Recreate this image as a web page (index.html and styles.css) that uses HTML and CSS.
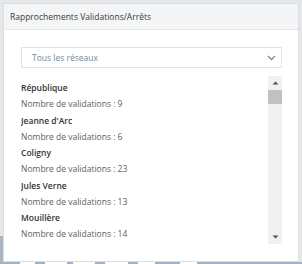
FILE: index.html
```html
<!DOCTYPE html>
<html lang="fr">
<head>
<meta charset="utf-8">
<link rel="stylesheet" href="styles.css">
</head>
<body>
<div class="page">
  <div class="page-side"></div>
  <div class="page-bottom">
    <span class="seg s1"></span><span class="gap g1"></span>
    <span class="seg s2"></span><span class="gap g2"></span>
    <span class="seg s3"></span><span class="gap g3"></span>
    <span class="seg s4"></span><span class="gap g4"></span>
    <span class="seg s5"></span><span class="gap g5"></span>
    <span class="seg s6"></span><span class="gap g6"></span>
    <span class="seg s7"></span>
  </div>
</div>
<div class="modal">
  <div class="modal-header">Rapprochements Validations/Arrêts</div>
  <div class="modal-body">
    <div class="select">
      <span>Tous les réseaux</span>
      <svg class="chev" width="9" height="6" viewBox="0 0 9 6"><path d="M1 1 L4.5 4.5 L8 1" fill="none" stroke="#6f8ea3" stroke-width="1.3"/></svg>
    </div>
    <div class="list-wrap">
      <div class="list">
        <div class="item"><p class="name">République</p><p class="count">Nombre de validations : 9</p></div>
        <div class="item"><p class="name">Jeanne d'Arc</p><p class="count">Nombre de validations : 6</p></div>
        <div class="item"><p class="name">Coligny</p><p class="count">Nombre de validations : 23</p></div>
        <div class="item"><p class="name">Jules Verne</p><p class="count">Nombre de validations : 13</p></div>
        <div class="item"><p class="name">Mouillère</p><p class="count">Nombre de validations : 14</p></div>
      </div>
      <div class="scrollbar">
        <div class="sb-btn"><svg width="7" height="4" viewBox="0 0 7 4"><path d="M3.5 0.5 L6.5 3.5 L0.5 3.5 Z" fill="#505050"/></svg></div>
        <div class="sb-thumb"></div>
        <div class="sb-track"></div>
        <div class="sb-btn"><svg width="7" height="4" viewBox="0 0 7 4"><path d="M0.5 0.5 L6.5 0.5 L3.5 3.5 Z" fill="#505050"/></svg></div>
      </div>
    </div>
  </div>
</div>
</body>
</html>
```

FILE: styles.css
```css
html, body {
  margin: 0;
  padding: 0;
}
body {
  background: #e6e7e8;
  font-family: "Open Sans", "Noto Sans", sans-serif;
  width: 302px;
  height: 264px;
  overflow: hidden;
  position: relative;
}
.page {
  height: 264px;
  display: flex;
  flex-direction: column;
  justify-content: flex-end;
  position: relative;
}
.page-side {
  width: 3px;
  height: 26px;
  background: #a9b5c2;
}
.page-bottom {
  display: flex;
  height: 2px;
}
.seg { background: #a4b1bf; height: 2px; }
.gap { background: #ffffff; height: 2px; }
.s1 { width: 20px; }
.g1 { width: 15px; }
.s2 { width: 10px; }
.g2 { width: 22px; }
.s3 { width: 6px; }
.g3 { width: 22px; }
.s4 { width: 10px; }
.g4 { width: 23px; }
.s5 { width: 10px; }
.g5 { width: 17px; }
.s6 { width: 25px; }
.g6 { width: 17px; }
.s7 { flex: 1; }

.modal {
  position: absolute;
  left: 3px;
  top: 3px;
  width: 296px;
  height: 259px;
  box-sizing: border-box;
  border: 1px solid #dcdfe2;
  background: #ffffff;
  display: flex;
  flex-direction: column;
}
.modal-header {
  height: 26px;
  box-sizing: border-box;
  background: #f4f5f6;
  border-bottom: 1px solid #e3e5e7;
  padding-left: 6px;
  display: flex;
  align-items: center;
  font-size: 8.5px;
  color: #3a3a3a;
}
.modal-body {
  padding: 17px 16px 0 17px;
  display: flex;
  flex-direction: column;
}
.select {
  height: 21px;
  box-sizing: border-box;
  border: 1px solid #e1e3e5;
  display: flex;
  align-items: center;
  justify-content: space-between;
  padding: 0 5px 0 10px;
  font-size: 8.5px;
  color: #6f8ea3;
}
.chev { display: block; }
.list-wrap {
  margin-top: 8px;
  height: 168px;
  display: flex;
}
.list {
  flex: 1;
  overflow: hidden;
  padding-top: 4px;
}
.scrollbar {
  width: 14px;
  background: #f1f1f1;
  display: flex;
  flex-direction: column;
}
.sb-btn {
  height: 14px;
  display: flex;
  align-items: center;
  justify-content: center;
}
.sb-btn svg { display: block; }
.sb-thumb {
  height: 14px;
  background: #c1c1c1;
}
.sb-track { flex: 1; }
.item p {
  margin: 0;
  line-height: 16.25px;
  font-size: 8.5px;
}
.name {
  font-weight: 600;
  color: #333333;
}
.count {
  color: #5e5e5e;
}
```
